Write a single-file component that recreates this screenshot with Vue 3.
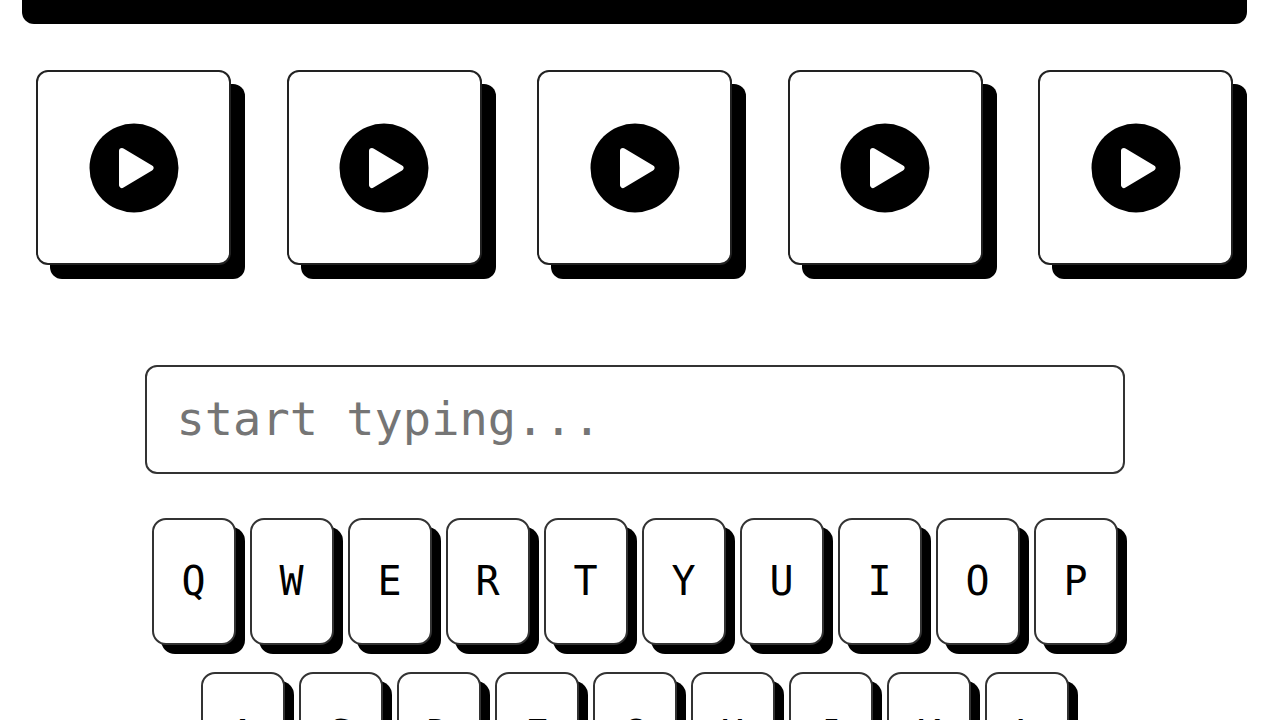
<script setup>
import { ref } from 'vue'

const typed = ref('')
const tiles = [1, 2, 3, 4, 5]
const rows = ['QWERTYUIOP', 'ASDFGHJKL'].map((r) => r.split(''))

function press(letter) {
  typed.value += letter.toLowerCase()
}
</script>

<template>
  <main class="page">
    <div class="banner"></div>

    <section class="tiles">
      <button v-for="n in tiles" :key="n" type="button" class="tile" :aria-label="'Play clip ' + n">
        <svg class="play" viewBox="0 0 90 90" aria-hidden="true">
          <circle cx="45" cy="45" r="44.5" />
          <path d="M33 28 L61.5 45 L33 62 Z" />
        </svg>
      </button>
    </section>

    <input v-model="typed" class="entry" type="text" aria-label="Your guess" placeholder="start typing..." />

    <section class="keyboard">
      <div v-for="(row, i) in rows" :key="i" class="row">
        <button v-for="k in row" :key="k" type="button" class="key" @click="press(k)">{{ k }}</button>
      </div>
    </section>
  </main>
</template>

<style>
body {
  margin: 0;
  background: #fff;
  overflow: hidden;
}
</style>

<style scoped>
.page {
  display: flex;
  flex-direction: column;
  align-items: center;
  height: 100vh;
  box-sizing: border-box;
  padding: 0 33px 0 22px;
  overflow: hidden;
  font-family: "DejaVu Sans Mono", monospace;
  color: #000;
}
.banner {
  flex: none;
  width: 100%;
  height: 24px;
  background: #000;
  border-radius: 0 0 12px 12px;
}
.tiles {
  display: flex;
  justify-content: space-between;
  align-self: stretch;
  padding: 46px 14px 0;
}
.tile {
  display: flex;
  align-items: center;
  justify-content: center;
  width: 195px;
  height: 195px;
  padding: 0;
  background: #fff;
  border: 2px solid #222;
  border-radius: 12px;
  box-shadow: 14px 14px 0 #000;
}
.play {
  width: 90px;
  height: 90px;
}
.play path {
  fill: #fff;
  stroke: #fff;
  stroke-width: 6px;
  stroke-linejoin: round;
}
.entry {
  flex: none;
  width: 80%;
  height: 109px;
  box-sizing: border-box;
  margin-top: 100px;
  padding: 0 30px 2px;
  font-family: inherit;
  font-size: 47px;
  color: #000;
  background: #fff;
  border: 2px solid #333;
  border-radius: 12px;
  outline: none;
}
.entry::placeholder {
  color: #757575;
  opacity: 1;
}
.keyboard {
  display: flex;
  flex-direction: column;
  align-items: center;
  gap: 27px;
  margin-top: 44px;
}
.row {
  display: flex;
  gap: 14px;
}
.key {
  display: flex;
  align-items: center;
  justify-content: center;
  width: 84px;
  height: 127px;
  padding: 0 0 2px;
  font-family: inherit;
  font-size: 40px;
  line-height: 48px;
  color: #000;
  background: #fff;
  border: 2px solid #333;
  border-radius: 14px;
  box-shadow: 9px 9px 0 #000;
}
</style>
